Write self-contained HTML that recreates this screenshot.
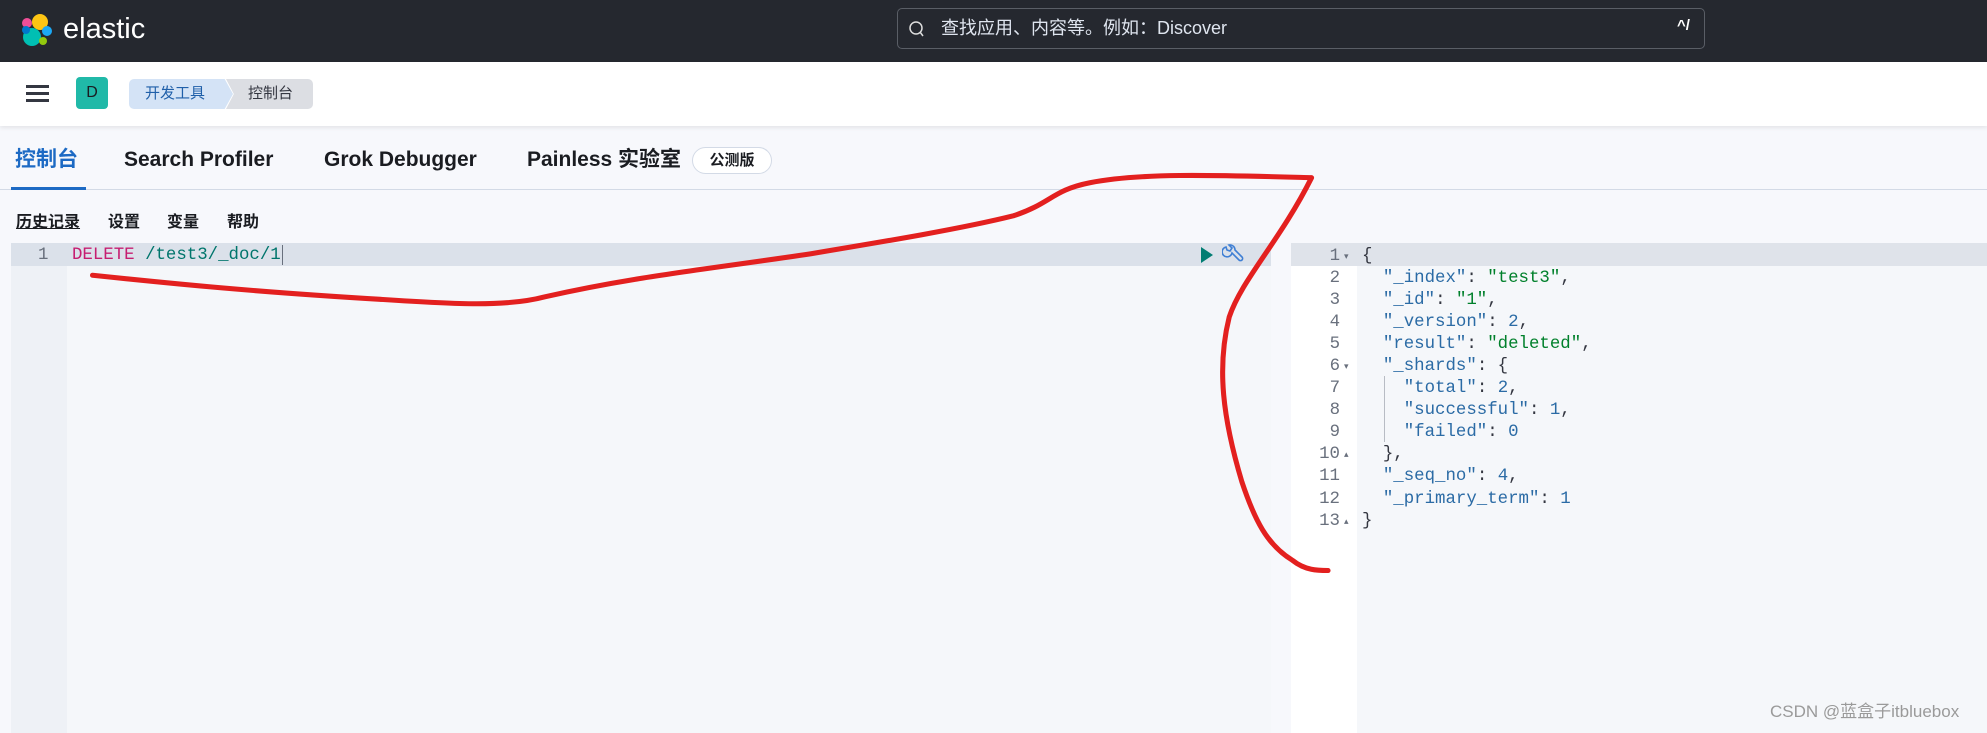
<!DOCTYPE html>
<html><head><meta charset="utf-8"><style>
*{margin:0;padding:0;box-sizing:border-box}
body{width:1987px;height:733px;overflow:hidden;background:#f7f8fc;font-family:"Liberation Sans","Noto Sans CJK SC",sans-serif;position:relative}
.abs{position:absolute}
.mono{font-family:"Liberation Mono","DejaVu Sans Mono",monospace;font-size:17.4px;white-space:pre}
.tab{position:absolute;top:146px;font-size:21px;font-weight:bold;color:#1a1c21;line-height:28px;height:28px}
</style></head><body>
<div class="abs" style="left:0;top:0;width:1987px;height:62px;background:#25282f"></div>
<svg class="abs" style="left:21px;top:12px" width="32" height="36" viewBox="0 0 32 36">
<circle cx="19" cy="10" r="8" fill="#fec514"/><circle cx="6" cy="11" r="5" fill="#f04e98"/>
<circle cx="26" cy="19" r="5" fill="#1ba9f5"/><circle cx="11" cy="25" r="9" fill="#00bfb3"/>
<circle cx="22" cy="29" r="4" fill="#93c90e"/><circle cx="5" cy="18" r="4" fill="#0077cc"/></svg>
<div class="abs" style="left:63px;top:13px;color:#fff;font-size:29px">elastic</div>
<div class="abs" style="left:897px;top:8px;width:808px;height:41px;border:1px solid #5a5e66;border-radius:5px;background:#25282f"></div>
<svg class="abs" style="left:908px;top:20px" width="16" height="18"><circle cx="8" cy="8" r="6" fill="none" stroke="#ddd" stroke-width="1.5"/><line x1="12" y1="12" x2="15" y2="16" stroke="#ddd" stroke-width="1.5"/></svg>
<div class="abs" style="left:941px;top:16px;color:#dfe5ef;font-size:18px;line-height:24px">查找应用、内容等。例如：Discover</div>
<div class="abs" style="left:1677px;top:17px;color:#fff;font-size:15px;font-weight:bold">^/</div>
<div class="abs" style="left:0;top:62px;width:1987px;height:64px;background:#fff;box-shadow:0 2px 4px rgba(0,0,0,.08)"></div>
<div class="abs" style="left:26px;top:85px;width:23px;height:3px;background:#343741;box-shadow:0 7px 0 #343741,0 14px 0 #343741"></div>
<div class="abs" style="left:76px;top:77px;width:32px;height:32px;border-radius:4px;background:#20b9a8;color:#1a1c21;font-size:16px;text-align:center;line-height:32px">D</div>
<div class="abs" style="left:129px;top:79px;width:104px;height:30px;background:#d4e3f6;border-radius:5px 0 0 5px;clip-path:polygon(0 0,92% 0,100% 50%,92% 100%,0 100%);color:#1f5fa9;font-size:15px;line-height:30px;padding-left:16px">开发工具</div>
<div class="abs" style="left:226px;top:79px;width:87px;height:30px;background:#dcdee3;border-radius:0 5px 5px 0;clip-path:polygon(0 0,100% 0,100% 100%,0 100%,9% 50%);color:#343741;font-size:15px;line-height:30px;padding-left:22px">控制台</div>
<div class="abs" style="left:0;top:189px;width:1987px;height:1px;background:#d3dae6"></div>
<div class="abs" style="left:11px;top:187px;width:75px;height:3px;background:#1d6ac4"></div>
<div class="tab" style="left:15px;color:#1d6ac4">控制台</div>
<div class="tab" style="left:124px">Search Profiler</div>
<div class="tab" style="left:324px">Grok Debugger</div>
<div class="tab" style="left:527px">Painless 实验室</div>
<div class="abs" style="left:692px;top:147px;width:80px;height:27px;border:1px solid #d3dae6;border-radius:14px;background:#fff;font-size:15px;text-align:center;line-height:25px;color:#1a1c21;font-weight:bold">公测版</div>
<div class="abs" style="top:212px;left:16px;font-size:16px;line-height:22px;font-weight:bold;color:#1a1c21;text-decoration:underline">历史记录</div>
<div class="abs" style="top:212px;left:108px;font-size:16px;line-height:22px;font-weight:bold;color:#1a1c21">设置</div>
<div class="abs" style="top:212px;left:167px;font-size:16px;line-height:22px;font-weight:bold;color:#1a1c21">变量</div>
<div class="abs" style="top:212px;left:227px;font-size:16px;line-height:22px;font-weight:bold;color:#1a1c21">帮助</div>
<div class="abs" style="left:11px;top:243px;width:1260px;height:490px;background:#f5f7fa"></div>
<div class="abs" style="left:11px;top:243px;width:56px;height:490px;background:#eef1f6"></div>
<div class="abs" style="left:11px;top:243px;width:1260px;height:23px;background:#dbe1ea"></div>
<div class="abs mono" style="left:38px;top:246px;color:#69707d">1</div>
<div class="abs mono" style="left:72px;top:246px"><span style="color:#c61e71">DELETE</span> <span style="color:#00756c">/test3/_doc/1</span></div>
<div class="abs" style="left:282px;top:245px;width:1px;height:20px;background:#69707d"></div>
<svg class="abs" style="left:1199px;top:246px" width="16" height="18"><path d="M2 1 L14 9 L2 17 Z" fill="#017d73"/></svg>
<svg class="abs" style="left:1222px;top:244px" width="22" height="22" viewBox="0 0 22 22" fill="none" stroke="#3f7fd4" stroke-width="1.6"><path d="M4 3 a5 5 0 1 0 6 6 L17 16 a2 2 0 0 0 3 -3 L13 6 a5 5 0 0 0 -6 -5 l3 3 -2 3 -3 -1z"/></svg>
<div class="abs" style="left:1291px;top:243px;width:696px;height:490px;background:#f5f7fa"></div>
<div class="abs" style="left:1291px;top:243px;width:66px;height:490px;background:#fff"></div>
<div class="abs" style="left:1291px;top:243px;width:696px;height:23px;background:#dfe3ea"></div>
<div class="abs" style="left:1384px;top:376px;width:1px;height:66px;background:#b8bcc4"></div>
<div class="abs mono" style="left:1291px;top:246px;width:49px;text-align:right;line-height:22.05px;color:#69707d">1
2
3
4
5
6
7
8
9
10
11
12
13</div>
<div class="abs" style="left:1344px;top:245px;font-size:9px;line-height:22.05px;color:#69707d;white-space:pre">▾




▾



▴


▴</div>
<div class="abs mono" style="left:1362px;top:246px;line-height:22.05px;color:#343741">{
  <span style="color:#2b6ba5">"_index"</span>: <span style="color:#00802b">"test3"</span>,
  <span style="color:#2b6ba5">"_id"</span>: <span style="color:#00802b">"1"</span>,
  <span style="color:#2b6ba5">"_version"</span>: <span style="color:#2b6ba5">2</span>,
  <span style="color:#2b6ba5">"result"</span>: <span style="color:#00802b">"deleted"</span>,
  <span style="color:#2b6ba5">"_shards"</span>: {
    <span style="color:#2b6ba5">"total"</span>: <span style="color:#2b6ba5">2</span>,
    <span style="color:#2b6ba5">"successful"</span>: <span style="color:#2b6ba5">1</span>,
    <span style="color:#2b6ba5">"failed"</span>: <span style="color:#2b6ba5">0</span>
  },
  <span style="color:#2b6ba5">"_seq_no"</span>: <span style="color:#2b6ba5">4</span>,
  <span style="color:#2b6ba5">"_primary_term"</span>: <span style="color:#2b6ba5">1</span>
}</div>
<svg class="abs" style="left:0;top:0" width="1987" height="733" viewBox="0 0 1568 578"><path d="M73 217 C140 224 200 230 300 236 C360 240 400 242 430 234 C500 218 560 212 640 200 C700 190 760 180 800 170 C830 160 830 150 860 144 C900 136 960 138 1035 140 C1010 190 980 220 970 250 C960 290 965 330 980 380 C990 410 1000 430 1020 442 C1030 450 1040 450 1048 450" fill="none" stroke="#e3201f" stroke-width="4" stroke-linecap="round" stroke-linejoin="round"/></svg>
<div class="abs" style="left:1770px;top:701px;font-size:17px;line-height:22px;color:#9a9a9a">CSDN @蓝盒子itbluebox</div>
</body></html>
